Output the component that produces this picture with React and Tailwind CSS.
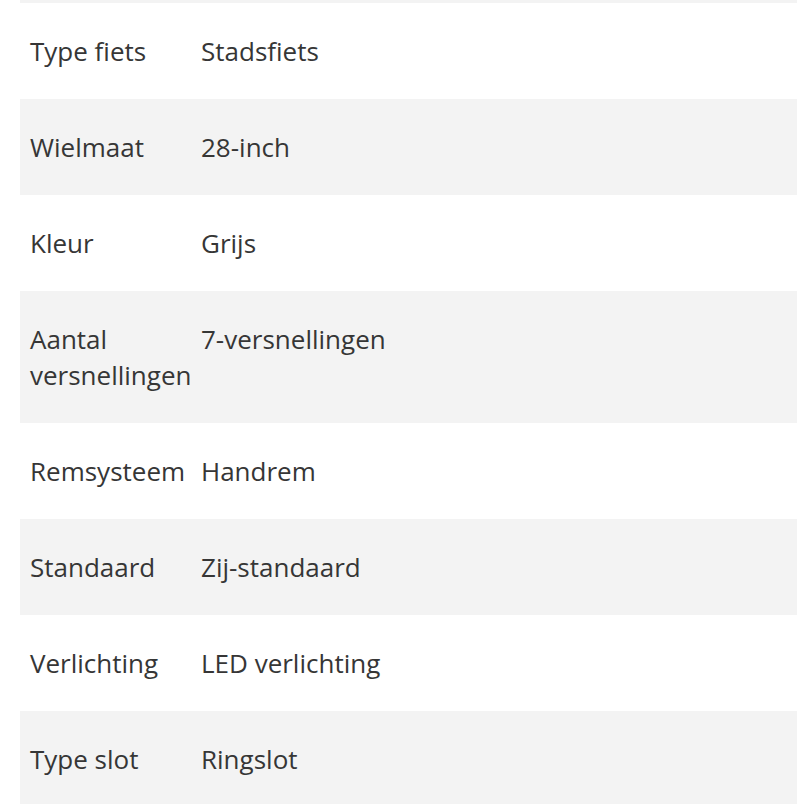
import React from "react";

const specs = [
  { label: "Type fiets", value: "Stadsfiets" },
  { label: "Wielmaat", value: "28-inch" },
  { label: "Kleur", value: "Grijs" },
  { label: "Aantal versnellingen", value: "7-versnellingen" },
  { label: "Remsysteem", value: "Handrem" },
  { label: "Standaard", value: "Zij-standaard" },
  { label: "Verlichting", value: "LED verlichting" },
  { label: "Type slot", value: "Ringslot" },
];

export default function App() {
  return (
    <div className="min-h-[804px] overflow-hidden bg-white font-['Open_Sans',sans-serif] text-[26px] leading-[36px] text-[#363636]">
      <div className="ml-[20px] h-[3px] bg-[#f3f3f3]" />
      <div className="ml-[20px]">
        {specs.map((row, i) => (
          <div key={row.label} className={`flex py-[30px] ${i % 2 === 1 ? "bg-[#f3f3f3]" : "bg-white"}`}>
            <div className="w-[181px] shrink-0 px-[10px]">{row.label}</div>
            <div className="flex-1">{row.value}</div>
          </div>
        ))}
      </div>
    </div>
  );
}
